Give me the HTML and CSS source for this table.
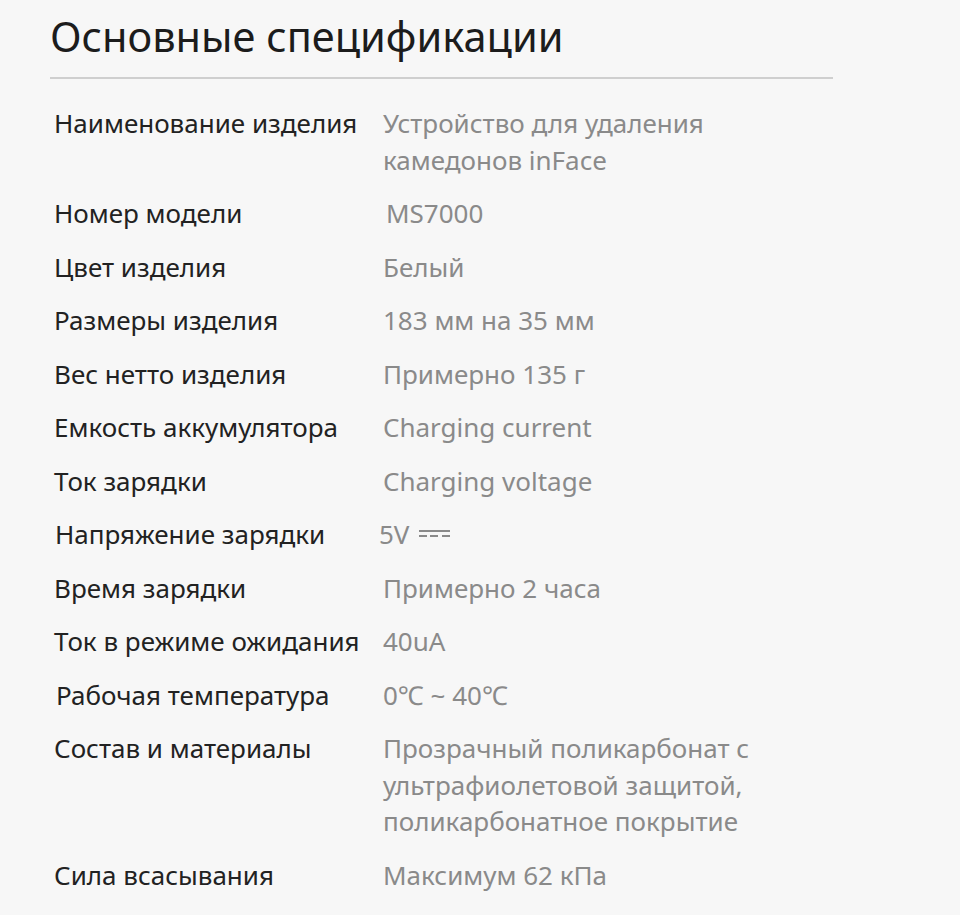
FILE: index.html
```html
<!DOCTYPE html>
<html lang="ru">
<head>
<meta charset="utf-8">
<link rel="stylesheet" href="styles.css">
</head>
<body>
<main class="page">
  <h1 class="title">Основные спецификации</h1>
  <div class="specs">
    <div class="label">Наименование изделия</div>
    <div class="value">Устройство для удаления камедонов inFace</div>
    <div class="label">Номер модели</div>
    <div class="value shift-r">MS7000</div>
    <div class="label">Цвет изделия</div>
    <div class="value">Белый</div>
    <div class="label">Размеры изделия</div>
    <div class="value">183 мм на 35 мм</div>
    <div class="label">Вес нетто изделия</div>
    <div class="value">Примерно 135 г</div>
    <div class="label">Емкость аккумулятора</div>
    <div class="value">Charging current</div>
    <div class="label">Ток зарядки</div>
    <div class="value">Charging voltage</div>
    <div class="label shift-r1">Напряжение зарядки</div>
    <div class="value shift-l">5V <span class="dc" aria-label="DC"></span></div>
    <div class="label">Время зарядки</div>
    <div class="value">Примерно 2 часа</div>
    <div class="label">Ток в режиме ожидания</div>
    <div class="value">40uA</div>
    <div class="label shift-r2">Рабочая температура</div>
    <div class="value">0℃ ~ 40℃</div>
    <div class="label">Состав и материалы</div>
    <div class="value">Прозрачный поликарбонат с ультрафиолетовой защитой, поликарбонатное покрытие</div>
    <div class="label">Сила всасывания</div>
    <div class="value">Максимум 62 кПа</div>
  </div>
</main>
</body>
</html>
```
FILE: styles.css
```css
html, body {
  margin: 0;
  padding: 0;
  background: #f7f7f7;
}
body {
  font-family: "Noto Sans", "Open Sans", sans-serif;
  color: #222;
}
.page {
  width: 783px;
  padding: 9px 0 0 50px;
}
.title {
  margin: 0;
  font-weight: 400;
  font-size: 41.5px;
  line-height: 54px;
  color: #1c1c1c;
  padding-bottom: 14px;
  border-bottom: 2px solid #cfcfcf;
}
.specs {
  display: grid;
  grid-template-columns: 329px 400px;
  row-gap: 17px;
  padding: 26px 0 0 4px;
}
.label, .value {
  font-size: 26px;
  line-height: 36.5px;
}
.label {
  color: #222;
}
.value {
  color: #8a8a8a;
}
.shift-r { padding-left: 3px; }
.shift-l { margin-left: -4px; }
.shift-r1 { padding-left: 1px; }
.shift-r2 { padding-left: 2px; }
.dc {
  display: inline-block;
  width: 31px;
  height: 5px;
  margin-left: 3px;
  vertical-align: 7px;
  border-top: 2px solid #8a8a8a;
  background: repeating-linear-gradient(90deg, #8a8a8a 0 8px, transparent 8px 11.5px) bottom / 100% 2px no-repeat;
}
```
